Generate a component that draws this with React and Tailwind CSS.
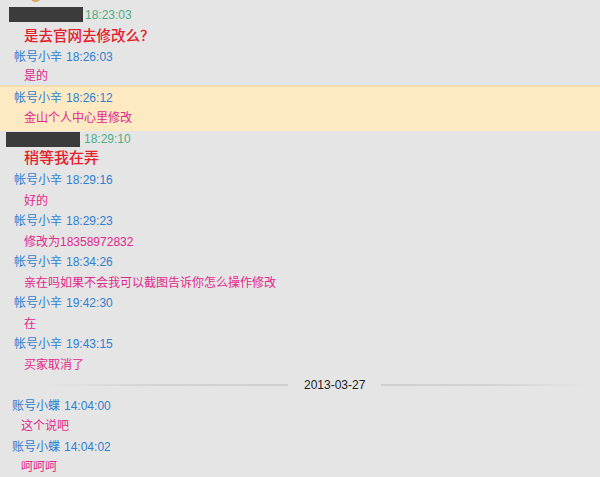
import React from 'react';

const FONT = { fontFamily: '"Liberation Sans", "Noto Sans CJK SC", sans-serif' };

const Header = ({ name, time, x = 'pl-[14px]' }) => (
  <div className={`h-[20.5px] flex items-center ${x} text-[12px] text-[#2f7fd0]`}>
    <span>{name}</span>
    <span className="ml-[4px]">{time}</span>
  </div>
);

const Msg = ({ text, x = 'pl-[24px]' }) => (
  <div className={`h-[20.5px] flex items-center ${x} text-[12px] text-[#e0288a]`}>{text}</div>
);

const DateLine = ({ date }) => (
  <div className="h-[20.5px] flex items-center pl-[40px] pr-[10px]">
    <div className="w-[248px] h-[2px] bg-gradient-to-r from-transparent via-[#d2d2d2] to-[#cfcfcf]" />
    <span className="px-[16px] text-[12px] text-[#222]">{date}</span>
    <div className="flex-1 h-[2px] bg-gradient-to-r from-[#cfcfcf] via-[#d2d2d2] to-transparent" />
  </div>
);

export default function App() {
  const day1 = [
    { name: '帐号小辛', time: '18:29:16', text: '好的' },
    { name: '帐号小辛', time: '18:29:23', text: '修改为18358972832' },
    { name: '帐号小辛', time: '18:34:26', text: '亲在吗如果不会我可以截图告诉你怎么操作修改' },
    { name: '帐号小辛', time: '19:42:30', text: '在' },
    { name: '帐号小辛', time: '19:43:15', text: '买家取消了' },
  ];
  const day2 = [
    { name: '账号小蝶', time: '14:04:00', text: '这个说吧' },
    { name: '账号小蝶', time: '14:04:02', text: '呵呵呵' },
  ];

  return (
    <div className="relative w-[600px] h-[477px] overflow-hidden bg-[#e5e5e5]" style={FONT}>
      {/* avatar edge peeking from above */}
      <div className="absolute left-[29px] top-[-11px] w-[13px] h-[13px] rounded-full bg-[#d8a35a]" />

      <div className="flex flex-col pt-[4px]">
        <div className="h-[21px] flex items-center">
          <div className="ml-[9px] w-[74px] h-[15px] bg-[#3b3b3b]" />
          <span className="ml-[2px] text-[12px] text-[#4fae80]">18:23:03</span>
        </div>
        <div className="h-[24px] flex items-center pl-[24px] text-[14.5px] font-medium text-[#e3202c]">是去官网去修改么？</div>
        <div className="h-[16px] flex items-center pl-[14px] text-[12px] text-[#2f7fd0]">
          <span>帐号小辛</span>
          <span className="ml-[4px]">18:26:03</span>
        </div>
        <div className="h-[17px] flex items-center pt-[5px] pl-[24px] text-[12px] leading-[12px] text-[#e0288a]">是的</div>
        <div className="h-[5px] bg-[#dfe6ea] border-b-2 border-[#f4deb0]" />

        <div className="h-[44px] flex flex-col bg-[#fdeac2]">
          <div className="h-[22px] flex items-center pl-[14px] text-[12px] text-[#2f7fd0]">
            <span>帐号小辛</span>
            <span className="ml-[4px]">18:26:12</span>
          </div>
          <div className="h-[18px] flex items-center pl-[24px] text-[12px] text-[#e0288a]">金山个人中心里修改</div>
        </div>

        <div className="h-[16px] flex items-center">
          <div className="ml-[6px] w-[74px] h-[15px] bg-[#3b3b3b]" />
          <span className="ml-[4px] text-[12px] text-[#4fae80]">18:29:10</span>
        </div>
        <div className="h-[23px] flex items-center pl-[24px] text-[15px] font-medium text-[#e3202c]">稍等我在弄</div>

        {day1.map((m) => (
          <React.Fragment key={m.time}>
            <Header name={m.name} time={m.time} />
            <Msg text={m.text} />
          </React.Fragment>
        ))}

        <DateLine date="2013-03-27" />

        {day2.map((m) => (
          <React.Fragment key={m.time}>
            <Header name={m.name} time={m.time} x="pl-[12px]" />
            <Msg text={m.text} x="pl-[21px]" />
          </React.Fragment>
        ))}
      </div>
    </div>
  );
}
